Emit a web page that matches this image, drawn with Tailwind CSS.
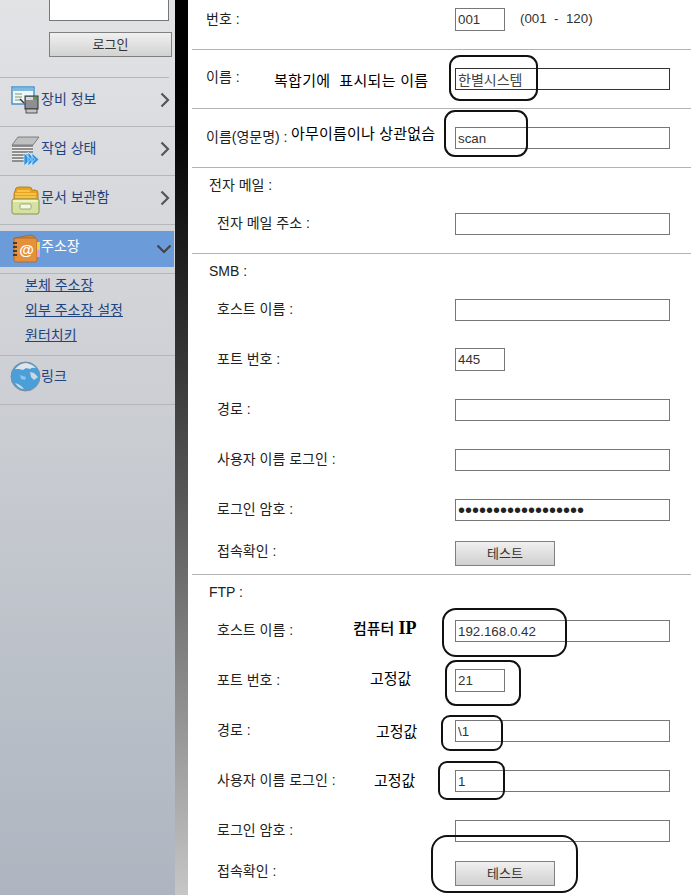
<!DOCTYPE html>
<html lang="ko">
<head>
    <meta charset="UTF-8">
    <title>주소장</title>
    <script src="https://cdn.jsdelivr.net/npm/@tailwindcss/browser@4"></script>
</head>
<body class="bg-white">
<div class="flex w-[691px] h-[895px] overflow-hidden text-[14px] text-[#222] font-['Liberation_Sans','Noto_Sans_CJK_KR',sans-serif]">

    <!-- left menu -->
    <aside class="w-[175px] shrink-0 bg-linear-to-b from-[#e2e3e5] via-[#c9ccd1] via-50% to-[#adb5c0]">
        <div class="h-[78px] pl-[49px] border-b border-[#b4b6b9] mr-[6px]">
            <div class="w-[120px] h-[21px] bg-white border border-t-0 border-[#777]"></div>
            <button class="block mt-[11px] w-[123px] h-[25px] border border-[#808080] bg-linear-to-b from-[#f0f0f0] to-[#d2d2d2] text-[13px] text-[#333]">로그인</button>
        </div>

        <div class="h-[49px] flex items-center border-b border-[#b4b6b9] pl-[11px] pr-[5px]">
            <svg class="w-[28px] h-[28px] shrink-0 mt-[-4px]" viewBox="0 0 28 28">
                <rect x="1" y="1" width="22" height="17" fill="#eef6fb" stroke="#4b93c9" stroke-width="1.5"/>
                <rect x="2" y="2" width="20" height="3" fill="#7fb9e0"/>
                <path d="M4 8h7M4 11h7M4 14h5" stroke="#7e9a5e" stroke-width="1"/>
                <path d="M9 13l4 4" stroke="#333" stroke-width="1.5"/>
                <rect x="14" y="10" width="13" height="13" fill="#8d8f92" stroke="#333"/>
                <rect x="15" y="11" width="11" height="3" fill="#d9dadb"/>
                <rect x="22" y="11" width="4" height="3" fill="#4da64d"/>
                <rect x="15" y="23" width="11" height="4" fill="#c5c6c8" stroke="#333" stroke-width=".8"/>
            </svg>
            <span class="ml-[2px] text-[#1f437f] leading-none mt-[-6px]">장비 정보</span>
            <svg class="ml-auto w-[10px] h-[16px] mt-[-4px]" viewBox="0 0 10 16"><path d="M1.5 1.5 8 8l-6.500 6.500" fill="none" stroke="#555" stroke-width="2.200"/></svg>
        </div>

        <div class="h-[49px] flex items-center border-b border-[#b4b6b9] pl-[11px] pr-[5px]">
            <svg class="w-[29px] h-[30px] shrink-0" viewBox="0 0 29 30">
                <path d="M7 1h21l-6 8H1z" fill="#bfc0c1" stroke="#777" stroke-width=".9"/>
                <path d="M1 10h21M1 13h21M1 16h21M1 19h17M1 22h15M1 25h15" stroke="#777" stroke-width="1.700"/>
                <path d="M1 11.500h21M1 14.500h21M1 17.500h17M1 20.500h15M1 23.500h15" stroke="#eee" stroke-width="1.200"/>
                <path d="M13 17l7 6.500-7 6.500zM17 16l7 7.500-7 6.500zM21 17l7 6.500-7 6.500z" fill="#2f94e0" stroke="#d8ecfa" stroke-width=".7"/>
            </svg>
            <span class="ml-[1px] text-[#1f437f] leading-none mt-[-6px]">작업 상태</span>
            <svg class="ml-auto w-[10px] h-[16px] mt-[-4px]" viewBox="0 0 10 16"><path d="M1.5 1.5 8 8l-6.500 6.500" fill="none" stroke="#555" stroke-width="2.200"/></svg>
        </div>

        <div class="h-[49px] flex items-center border-b border-[#b4b6b9] pl-[11px] pr-[5px]">
            <svg class="w-[29px] h-[29px] shrink-0" viewBox="0 0 29 29">
                <path d="M4 5q0-4 4-4h10q3 0 3 3h3q3 0 3 3v7H3V8z" fill="#e8a21f" stroke="#a9741c" stroke-width=".8"/>
                <path d="M6 5h13M4 8h21M4 11h21" stroke="#f7cf58" stroke-width="1.400"/>
                <path d="M1 15q0-2 2-2h23q2 0 2 2v11q0 2-2 2H3q-2 0-2-2z" fill="#d4e1a0" stroke="#88934f"/>
                <path d="M2 15h25" stroke="#eef4c8" stroke-width="2"/>
                <rect x="9" y="18" width="11" height="5" rx="1" fill="#f4f6e6" stroke="#8f9a5c" stroke-width=".8"/>
            </svg>
            <span class="ml-[1px] text-[#1f437f] leading-none mt-[-6px]">문서 보관함</span>
            <svg class="ml-auto w-[10px] h-[16px] mt-[-4px]" viewBox="0 0 10 16"><path d="M1.5 1.5 8 8l-6.500 6.500" fill="none" stroke="#555" stroke-width="2.200"/></svg>
        </div>

        <div class="h-[49px] pt-[6px] border-b border-[#b4b6b9]">
            <div class="h-[36px] mr-[1px] bg-[#6c9bda] flex items-center pl-[11px] pr-[2px]">
                <svg class="w-[30px] h-[29px] shrink-0 mt-[-2px]" viewBox="0 0 30 29">
                    <path d="M3 4 20 1q3 0 4 3v2H3z" fill="#c98a3c" stroke="#8e5a22" stroke-width=".6"/>
                    <rect x="3" y="4" width="23" height="24" rx="2" fill="#e5913c" stroke="#a4652a" stroke-width=".8"/>
                    <path d="M2 9h4M2 13h4M2 17h4M2 21h4" stroke="#222" stroke-width="1.500"/>
                    <rect x="26" y="8" width="3" height="8" fill="#f0d050"/>
                    <rect x="26" y="16" width="3" height="7" fill="#d9a0d8"/>
                    <text x="15.500" y="21" text-anchor="middle" font-size="15" font-weight="700" fill="#fff" font-family="Liberation Sans">@</text>
                </svg>
                <span class="text-white leading-none mt-[-6px]">주소장</span>
                <svg class="ml-auto w-[16px] h-[10px]" viewBox="0 0 16 10"><path d="M1.500 1.500 8 8l6.500-6.500" fill="none" stroke="#444" stroke-width="2.200"/></svg>
            </div>
        </div>

        <div class="h-[82px] pl-[25px] border-b border-[#b4b6b9] flex flex-col text-[#1f437f] underline leading-[25px]">
            <a class="mt-[-1px]">본체 주소장</a>
            <a>외부 주소장 설정</a>
            <a>원터치키</a>
        </div>

        <div class="h-[49px] flex items-center border-b border-[#b4b6b9] pl-[10px]">
            <svg class="w-[31px] h-[31px] shrink-0 mt-[-8px]" viewBox="0 0 31 31">
                <circle cx="15.500" cy="15.500" r="14.500" fill="#4b9fd8" stroke="#7d8ea0"/>
                <path d="M5 8q5-6 11-6 6 1 10 5-4-1-6 1l-4-1-3 2-4-1z" fill="#dfe6ea"/>
                <path d="M20 11l4 1 4 4-4 3-3-3zM5 22q5 1 9 6-5 0-9-6z" fill="#cbd9e2"/>
                <path d="M10 14l6 2-1 3-4-1z" fill="#8cc4ea"/>
            </svg>
            <span class="text-[#1f437f] leading-none mt-[-8px]">링크</span>
        </div>
    </aside>

    <!-- dark strip between menu and form -->
    <div class="w-[13px] shrink-0 bg-linear-to-b from-[#000] to-[#c6c6c6]"></div>

    <!-- form -->
    <main class="relative flex-1 pl-[4px]">
        <section class="h-[50px] border-b border-[#b2b2b2] pt-[8px]">
            <div class="flex h-[22px] items-center">
                <span class="w-[263px] pl-[14px]">번호 :</span>
                <input value="001" class="w-[50px] h-[23px] border border-[#777] pl-[2px] text-[13.33px] text-[#333]">
                <span class="ml-[15px] text-[13.33px] text-[#333] whitespace-pre">(001  -  120)</span>
            </div>
        </section>

        <section class="h-[59px] border-b border-[#b2b2b2] pt-[18px]">
            <div class="flex h-[22px] items-center">
                <span class="w-[263px] pl-[14px] mt-[-3px]">이름 :</span>
                <input value="한별시스템" class="w-[215px] h-[22px] border border-[#333] pl-[2px] text-[14px] text-[#444]">
            </div>
        </section>

        <section class="h-[59px] border-b border-[#b2b2b2] pt-[18px]">
            <div class="flex h-[22px] items-center">
                <span class="w-[263px] pl-[14px] mt-[-1px]">이름(영문명) :</span>
                <input value="scan" class="w-[215px] h-[22px] border border-[#777] pl-[2px] text-[13.33px] text-[#333]">
            </div>
        </section>

        <section class="h-[86px] border-b border-[#b2b2b2]">
            <div class="h-[45px] pt-[8px] pl-[17px] leading-[18px]">전자 메일 :</div>
            <div class="flex h-[22px] items-center">
                <span class="w-[263px] pl-[25px] mt-[-1px]">전자 메일 주소 :</span>
                <input class="w-[215px] h-[22px] border border-[#777]">
            </div>
        </section>

        <section class="h-[321px] border-b border-[#b2b2b2]">
            <div class="h-[45px] pt-[8px] pl-[17px] leading-[18px]">SMB :</div>
            <div class="flex h-[49px] items-start">
                <span class="w-[263px] pl-[25px] leading-[20px]">호스트 이름 :</span>
                <input class="w-[215px] h-[22px] border border-[#777]">
            </div>
            <div class="flex h-[51px] items-start">
                <span class="w-[263px] pl-[25px] leading-[22px]">포트 번호 :</span>
                <input value="445" class="w-[50px] h-[23px] border border-[#777] pl-[2px] text-[13.33px] text-[#333]">
            </div>
            <div class="flex h-[50px] items-start">
                <span class="w-[263px] pl-[25px] leading-[20px]">경로 :</span>
                <input class="w-[215px] h-[22px] border border-[#777]">
            </div>
            <div class="flex h-[50px] items-start">
                <span class="w-[263px] pl-[25px] leading-[20px]">사용자 이름 로그인 :</span>
                <input class="w-[215px] h-[22px] border border-[#777]">
            </div>
            <div class="flex h-[42px] items-start">
                <span class="w-[263px] pl-[25px] leading-[20px]">로그인 암호 :</span>
                <input type="password" value="aaaaaaaaaaaaaaaaaa" class="w-[215px] h-[22px] border border-[#777] pl-[2px] text-[20px] text-[#222]">
            </div>
            <div class="flex items-start">
                <span class="w-[263px] pl-[25px] leading-[20px]">접속확인 :</span>
                <button class="w-[100px] h-[25px] border border-[#808080] bg-linear-to-b from-[#f0f0f0] to-[#d0d0d0] text-[13px] text-[#333]">테스트</button>
            </div>
        </section>

        <section>
            <div class="h-[45px] pt-[8px] pl-[17px] leading-[18px]">FTP :</div>
            <div class="flex h-[49px] items-start">
                <span class="w-[263px] pl-[25px] leading-[20px]">호스트 이름 :</span>
                <input value="192.168.0.42" class="w-[215px] h-[22px] border border-[#777] pl-[2px] text-[13.33px] text-[#333]">
            </div>
            <div class="flex h-[51px] items-start">
                <span class="w-[263px] pl-[25px] leading-[22px]">포트 번호 :</span>
                <input value="21" class="w-[50px] h-[23px] border border-[#777] pl-[2px] text-[13.33px] text-[#333]">
            </div>
            <div class="flex h-[50px] items-start">
                <span class="w-[263px] pl-[25px] leading-[20px]">경로 :</span>
                <input value="\1" class="w-[215px] h-[22px] border border-[#777] pl-[2px] text-[13.33px] text-[#333]">
            </div>
            <div class="flex h-[50px] items-start">
                <span class="w-[263px] pl-[25px] leading-[20px]">사용자 이름 로그인 :</span>
                <input value="1" class="w-[215px] h-[22px] border border-[#777] pl-[2px] text-[13.33px] text-[#333]">
            </div>
            <div class="flex h-[41px] items-start">
                <span class="w-[263px] pl-[25px] leading-[20px]">로그인 암호 :</span>
                <input class="w-[215px] h-[22px] border border-[#777]">
            </div>
            <div class="flex items-start">
                <span class="w-[263px] pl-[25px] leading-[20px]">접속확인 :</span>
                <button class="w-[100px] h-[25px] border border-[#808080] bg-linear-to-b from-[#f0f0f0] to-[#d0d0d0] text-[13px] text-[#333]">테스트</button>
            </div>
        </section>

        <!-- hand drawn notes over the screenshot -->
        <div class="absolute left-[261px] top-[55px] w-[89px] h-[46px] border-2 border-[#111] rounded-[11px]"></div>
        <div class="absolute left-[256px] top-[110px] w-[84px] h-[47px] border-2 border-[#111] rounded-[11px]"></div>
        <div class="absolute left-[254px] top-[608px] w-[125px] h-[49px] border-2 border-[#111] rounded-[14px]"></div>
        <div class="absolute left-[257px] top-[660px] w-[76px] h-[46px] border-2 border-[#111] rounded-[11px]"></div>
        <div class="absolute left-[253px] top-[715px] w-[62px] h-[36px] border-2 border-[#111] rounded-[9px]"></div>
        <div class="absolute left-[250px] top-[761px] w-[67px] h-[39px] border-2 border-[#111] rounded-[9px]"></div>
        <div class="absolute left-[243px] top-[835px] w-[147px] h-[58px] border-2 border-[#111] rounded-[16px]"></div>

        <span class="absolute left-[86px] top-[71px] text-[15px] tracking-[0.3px] text-black leading-[20px] whitespace-pre">복합기에  표시되는 이름</span>
        <span class="absolute left-[103px] top-[124px] text-[15px] tracking-[0.2px] text-black leading-[20px] whitespace-pre">아무이름이나 상관없슴</span>
        <span class="absolute left-[165px] top-[618px] text-[15px] text-black leading-[20px] font-medium whitespace-pre">컴퓨터 <span class="font-['Liberation_Serif'] font-bold text-[18px]">IP</span></span>
        <span class="absolute left-[182px] top-[669px] text-[15px] text-black leading-[20px]">고정값</span>
        <span class="absolute left-[188px] top-[722px] text-[15px] text-black leading-[20px]">고정값</span>
        <span class="absolute left-[186px] top-[771px] text-[15px] text-black leading-[20px]">고정값</span>
    </main>
</div>
</body>
</html>
